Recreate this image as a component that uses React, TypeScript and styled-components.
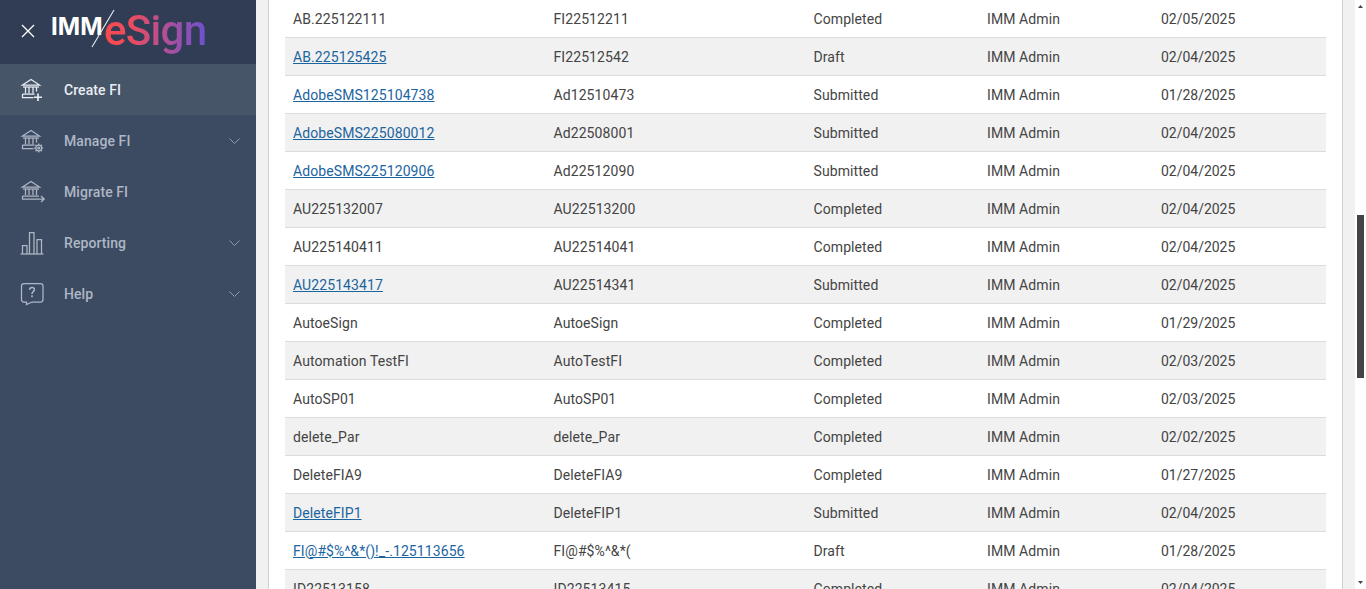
import React from "react";
import styled, { createGlobalStyle } from "styled-components";

const Global = createGlobalStyle`
  html, body { margin: 0; padding: 0; height: 100%; overflow: hidden; background: #fff; }
  #root { height: 100%; }
  * { box-sizing: border-box; }
`;

const Page = styled.div`
  display: grid;
  grid-template-columns: 256px 1fr 11px;
  height: 589px;
  font-family: Roboto, "Liberation Sans", sans-serif;
  font-size: 14px;
  overflow: hidden;
`;

const Sidebar = styled.aside`
  background: #3c4a62;
  display: flex;
  flex-direction: column;
`;

const Brand = styled.div`
  height: 64px;
  background: #303d54;
  display: flex;
  align-items: flex-start;
  padding-left: 21px;
`;

const CloseIcon = styled.svg`
  width: 14px;
  height: 14px;
  margin-top: 24px;
  flex: none;
`;

const Logo = styled.div`
  position: relative;
  margin-left: 16px;
  width: 160px;
  height: 64px;
  display: flex;
  align-items: flex-start;
`;

const LogoMark = styled.span`
  font-family: Inter, Roboto, sans-serif;
  font-weight: 700;
  font-size: 24px;
  line-height: 30px;
  letter-spacing: 0.1px;
  margin-top: 12px;
  color: #fff;
  width: 53px;
  flex: none;
`;

const LogoName = styled.span`
  font-family: Roboto, sans-serif;
  font-weight: 500;
  font-size: 42px;
  line-height: 50px;
  margin-top: 6px;
  letter-spacing: -0.7px;
  background: linear-gradient(90deg, #f9484f 0%, #ee4c5c 25%, #b54f94 58%, #6c51cf 100%);
  -webkit-background-clip: text;
  background-clip: text;
  color: transparent;
`;

const LogoSlash = styled.svg`
  position: absolute;
  left: 40px;
  top: 9px;
  width: 24px;
  height: 39px;
`;

const NavItem = styled.div<{ $active?: boolean }>`
  height: 51px;
  display: flex;
  align-items: center;
  padding: 0 16px 0 20px;
  background: ${(p) => (p.$active ? "#475569" : "transparent")};
  color: ${(p) => (p.$active ? "#e9edf2" : "#aeb7c5")};
  font-weight: 500;
  font-size: 14px;
  letter-spacing: 0.08px;
`;

const NavIcon = styled.svg`
  width: 26px;
  height: 26px;
  flex: none;
  margin-right: 18px;
  fill: none;
  stroke: currentColor;
  stroke-width: 1.25;
`;

const NavLabel = styled.span`
  flex: 1;
`;

const Chevron = styled.svg`
  width: 11px;
  height: 6px;
  flex: none;
  fill: none;
  stroke: #8f9aab;
  stroke-width: 1;
`;

const Main = styled.main`
  background: #f1f1f1;
  padding: 0 12px;
  overflow: hidden;
  min-width: 0;
`;

const Panel = styled.section`
  background: #fff;
  border-left: 1px solid #d0d0d0;
  border-right: 1px solid #d0d0d0;
  height: 100%;
  padding: 0 16px;
  overflow: hidden;
`;

const Table = styled.table`
  width: 1041px;
  table-layout: fixed;
  border-collapse: separate;
  border-spacing: 0;
  color: #444;
  font-size: 14px;
`;

const Row = styled.tr<{ $shade: boolean }>`
  height: 38px;
  background: ${(p) => (p.$shade ? "#f1f1f1" : "#fff")};
`;

const Cell = styled.td`
  height: 38px;
  padding: 0 8px;
  border-bottom: 1px solid #dcdcdc;
  white-space: nowrap;
  overflow: hidden;
  letter-spacing: 0.09px;
`;

const DateCell = styled(Cell)`
  letter-spacing: -0.02px;
`;

const FiLink = styled.a`
  color: #1b659f;
  text-decoration: underline;
`;

const Rail = styled.div`
  background: #fff;
  display: flex;
  flex-direction: column;
  align-items: center;
  position: relative;
  padding: 5px 0;
`;

const Arrow = styled.svg`
  width: 5px;
  height: 3px;
  fill: #444;
  flex: none;
`;

const Thumb = styled.div`
  width: 7px;
  height: 163px;
  margin-top: 207px;
  margin-bottom: auto;
  background: #444;
`;

type Rec = { name: string; code: string; status: string; date: string; link?: boolean };

const rows: Rec[] = [
  { name: "AB.225122111", code: "FI22512211", status: "Completed", date: "02/05/2025" },
  { name: "AB.225125425", code: "FI22512542", status: "Draft", date: "02/04/2025", link: true },
  { name: "AdobeSMS125104738", code: "Ad12510473", status: "Submitted", date: "01/28/2025", link: true },
  { name: "AdobeSMS225080012", code: "Ad22508001", status: "Submitted", date: "02/04/2025", link: true },
  { name: "AdobeSMS225120906", code: "Ad22512090", status: "Submitted", date: "02/04/2025", link: true },
  { name: "AU225132007", code: "AU22513200", status: "Completed", date: "02/04/2025" },
  { name: "AU225140411", code: "AU22514041", status: "Completed", date: "02/04/2025" },
  { name: "AU225143417", code: "AU22514341", status: "Submitted", date: "02/04/2025", link: true },
  { name: "AutoeSign", code: "AutoeSign", status: "Completed", date: "01/29/2025" },
  { name: "Automation TestFI", code: "AutoTestFI", status: "Completed", date: "02/03/2025" },
  { name: "AutoSP01", code: "AutoSP01", status: "Completed", date: "02/03/2025" },
  { name: "delete_Par", code: "delete_Par", status: "Completed", date: "02/02/2025" },
  { name: "DeleteFIA9", code: "DeleteFIA9", status: "Completed", date: "01/27/2025" },
  { name: "DeleteFIP1", code: "DeleteFIP1", status: "Submitted", date: "02/04/2025", link: true },
  { name: "FI@#$%^&*()!_-.125113656", code: "FI@#$%^&*(", status: "Draft", date: "01/28/2025", link: true },
  { name: "ID22513158", code: "ID22513415", status: "Completed", date: "02/04/2025" },
];

const Bank = () => (
  <>
    <path d="M2.5 8 L11 2.5 L19.5 8 Z" />
    <path d="M3 10 H19" />
    <path d="M5.5 10 V16.5 M9 10 V16.5 M13 10 V16.5 M16.5 10 V14.5" />
    <path d="M2.5 17 H14.5 M2.5 17 V20.5 H13.5" />
  </>
);

const ChevronDown = () => (
  <Chevron viewBox="0 0 11 6">
    <path d="M0.5 0.5 L5.5 5.5 L10.5 0.5" />
  </Chevron>
);

export default function App() {
  return (
    <Page>
      <Global />
      <Sidebar>
        <Brand>
          <CloseIcon viewBox="0 0 14 14" fill="none" stroke="#fff" strokeWidth="1.3">
            <path d="M1 1 L13 13 M13 1 L1 13" />
          </CloseIcon>
          <Logo>
            <LogoMark>IMM</LogoMark>
            <LogoName>eSign</LogoName>
            <LogoSlash viewBox="0 0 24 39" fill="none" stroke="#e8eaee" strokeWidth="1.1">
              <path d="M1 38 L23 1" />
            </LogoSlash>
          </Logo>
        </Brand>

        <NavItem $active>
          <NavIcon viewBox="0 0 26 26">
            <Bank />
            <path d="M18 16.5 V24 M14 20.25 H22" strokeWidth="1.7" />
          </NavIcon>
          <NavLabel>Create FI</NavLabel>
        </NavItem>

        <NavItem>
          <NavIcon viewBox="0 0 26 26">
            <Bank />
            <circle cx="18.7" cy="20" r="2.9" />
            <circle cx="18.7" cy="20" r="0.9" />
            <path d="M18.7 15.5 V17 M18.7 23 V24.5 M14.2 20 H15.7 M21.7 20 H23.2 M15.5 16.8 L16.6 17.9 M20.8 22.1 L21.9 23.2 M21.9 16.8 L20.8 17.9 M16.6 22.1 L15.5 23.2" />
          </NavIcon>
          <NavLabel>Manage FI</NavLabel>
          <ChevronDown />
        </NavItem>

        <NavItem>
          <NavIcon viewBox="0 0 26 26">
            <path d="M2.5 8 L11 2.5 L19.5 8 Z" />
            <path d="M3 10 H19" />
            <path d="M5.5 10 V16 M9 10 V16 M13 10 V16 M16.5 10 V16" />
            <path d="M2.5 17 H19 M2.5 17 V20 H24 M21 17 L24.2 20 L21 23" />
          </NavIcon>
          <NavLabel>Migrate FI</NavLabel>
        </NavItem>

        <NavItem>
          <NavIcon viewBox="0 0 26 26">
            <path d="M0.5 24 H23.5" />
            <path d="M2.5 24 V15.5 H7 V24 M9.5 24 V2.5 H14 V24 M17 24 V9.5 H21.5 V24" />
          </NavIcon>
          <NavLabel>Reporting</NavLabel>
          <ChevronDown />
        </NavItem>

        <NavItem>
          <NavIcon viewBox="0 0 26 26">
            <path d="M4 2.5 H20.5 Q23 2.5 23 5 V18.5 Q23 21 20.5 21 H12 L6.5 23.5 L6.5 21 H4 Q1.5 21 1.5 18.5 V5 Q1.5 2.5 4 2.5 Z" />
            <path d="M9.5 8.6 Q9.7 6.4 12 6.4 Q14.4 6.4 14.4 8.6 Q14.4 10 13 10.8 Q12 11.5 12 13" strokeWidth="1.5" />
            <path d="M12 14.3 V16.2" strokeWidth="1.6" />
          </NavIcon>
          <NavLabel>Help</NavLabel>
          <ChevronDown />
        </NavItem>
      </Sidebar>

      <Main>
        <Panel>
          <Table>
            <colgroup>
              <col style={{ width: 260.5 }} />
              <col style={{ width: 260 }} />
              <col style={{ width: 173.5 }} />
              <col style={{ width: 174 }} />
              <col style={{ width: 173 }} />
            </colgroup>
            <tbody>
              {rows.map((r, i) => (
                <Row key={r.name} $shade={i % 2 === 1}>
                  <Cell>{r.link ? <FiLink href="#">{r.name}</FiLink> : r.name}</Cell>
                  <Cell>{r.code}</Cell>
                  <Cell>{r.status}</Cell>
                  <Cell>IMM Admin</Cell>
                  <DateCell>{r.date}</DateCell>
                </Row>
              ))}
            </tbody>
          </Table>
        </Panel>
      </Main>

      <Rail>
        <Arrow viewBox="0 0 5 3">
          <path d="M2.5 0 L5 3 H0 Z" />
        </Arrow>
        <Thumb />
        <Arrow viewBox="0 0 5 3">
          <path d="M0 0 H5 L2.5 3 Z" />
        </Arrow>
      </Rail>
    </Page>
  );
}
